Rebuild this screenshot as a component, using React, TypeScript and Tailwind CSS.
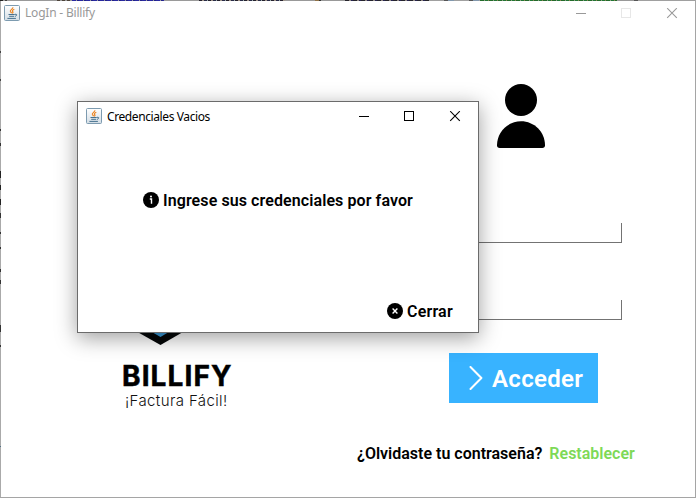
import type { ReactNode } from 'react';

function JavaIcon({ className = '' }: { className?: string }) {
  return (
    <svg className={`h-4 w-4 shrink-0 ${className}`} viewBox="0 0 16 16" fill="none">
      <defs>
        <linearGradient id="java-tile" x1="0" y1="0" x2="0" y2="1">
          <stop offset="0" stopColor="#ffffff" />
          <stop offset="1" stopColor="#d3dde5" />
        </linearGradient>
      </defs>
      <rect x="0.5" y="0.5" width="15" height="15" rx="1" fill="url(#java-tile)" stroke="#7d9bb0" />
      <path d="M8.8 2.3C9.4 4 5.6 4.8 6.4 6.5L7.6 8.2M10.3 4.3C8.2 5.2 8 6 9 7.2L8.4 8.5" stroke="#ec8420" strokeWidth="1.2" />
      <path d="M4.5 9.5h6.2M5.2 11.3h5M3.4 13.4h8.5M10.8 9.4c2.6-.8 2.5 1.3.2 2" stroke="#46718e" strokeWidth="1" />
    </svg>
  );
}

function CaptionButtons({ color, maxColor }: { color: string; maxColor: string }) {
  return (
    <svg className="h-[11px] w-[102px]" viewBox="0 0 102 11" fill="none">
      <path d="M0 5.5h10" stroke={color} />
      <rect x="45.5" y="0.5" width="9" height="9" stroke={maxColor} />
      <path d="M91.2 .2l9.6 9.6M100.8 .2l-9.6 9.6" stroke={color} strokeWidth="1.1" />
    </svg>
  );
}

function Field({ className = '' }: { className?: string }) {
  return <div className={`h-5 w-[200px] border-r border-b border-[#737373] ${className}`} />;
}

function RobotoLine({ children, className = '' }: { children: ReactNode; className?: string }) {
  return <span className={`whitespace-nowrap font-['Roboto',sans-serif] font-semibold ${className}`}>{children}</span>;
}

const topEdge: [number, string][] = [
  [7, 'repeating-linear-gradient(90deg,#222 0 3px,#999 3px 5px,#444 5px 7px)'],
  [50, '#999'],
  [15, 'repeating-linear-gradient(90deg,#4d4339 0 3px,#999 3px 5px)'],
  [92, 'repeating-linear-gradient(90deg,#2929a0 0 4px,#999 4px 5px,#222288 5px 7px)'],
  [35, '#9a9a9a'],
  [86, 'repeating-linear-gradient(90deg,#25212e 0 3px,#a09488 3px 5px,#292b47 5px 8px,#9aa 8px 9px)'],
  [60, 'repeating-linear-gradient(90deg,#999 0 30px,#907247 30px 34px,#333 34px 36px)'],
  [84, 'repeating-linear-gradient(90deg,#26252d 0 4px,#938b85 4px 6px,#282552 6px 8px)'],
  [51, 'repeating-linear-gradient(90deg,#a0a0a0 0 15px,#555 15px 19px,#8298ad 19px 25px)'],
  [137, 'repeating-linear-gradient(90deg,#236b2a 0 4px,#8c9d82 4px 5px,#207735 5px 8px,#8b8050 8px 9px)'],
  [17, '#999'],
  [4, '#555'],
  [58, '#a0a0a0'],
];

export default function App() {
  return (
    <div className="relative flex h-[498px] w-[696px] flex-col overflow-hidden border-r border-b border-[#a5a5a5] bg-white">
      <div className="flex h-px shrink-0 overflow-hidden">
        {topEdge.map(([width, background], i) => (
          <div key={i} className="h-px shrink-0" style={{ width, background }} />
        ))}
      </div>
      <div className="flex min-h-0 flex-1">
        <div className="w-px shrink-0 bg-[linear-gradient(180deg,#aaa_0_50px,#444_50px_52px,#aaa_52px_78px,#444_78px_80px,#aaa_80px_128px,#333_128px_130px,#aaa_130px_142px,#333_142px_145px,#aaa_145px_170px,#222_170px_177px,#aaa_177px_184px,#222_184px_189px,#aaa_189px_198px,#222_198px_204px,#aaa_204px_212px,#333_212px_217px,#aaa_217px_231px,#333_231px_233px,#aaa_233px_246px,#333_246px_248px,#aaa_248px_268px,#333_268px_271px,#aaa_271px_279px,#333_279px_283px,#aaa_283px_324px,#333_324px_331px,#aaa_331px_344px,#333_344px_346px,#aaa_346px_445px,#4f7085_445px_446px,#aaa_446px)]" />
        <div className="flex min-w-0 flex-1 flex-col">
          <header className="flex h-6 items-center justify-between pr-[17px] pl-[3px]">
            <div className="flex items-center">
              <JavaIcon />
              <span className="ml-[5px] whitespace-nowrap font-['Noto_Sans',sans-serif] text-[12px] leading-4 tracking-[-0.2px] text-[#999]">LogIn - Billify</span>
            </div>
            <CaptionButtons color="#999" maxColor="#e7e7e7" />
          </header>
          <main className="flex flex-1">
            <section className="flex w-[350px] flex-col pt-[243px]">
              <svg className="ml-[117px] h-[77px] w-[84px]" viewBox="0 0 84 77">
                <path d="M42.5 0L84 20v33L42.5 77 0 53V20z" fill="#050708" />
                <path d="M42.5 12L70 25v27.5L42.5 69 14 52.5V25z" fill="#3b9ddd" />
              </svg>
              <div className="mt-[18px] ml-[121px] whitespace-nowrap font-['Inter',sans-serif] text-[28px] leading-[27px] font-bold tracking-[1.1px] text-black [-webkit-text-stroke:0.5px_black]">BILLIFY</div>
              <div className="mt-[2px] ml-[124px] whitespace-nowrap font-['Inter',sans-serif] text-[15px] leading-[17px] font-light tracking-[0.38px] text-[#111]">¡Factura Fácil!</div>
            </section>
            <section className="flex flex-1 flex-col pt-[59px]">
              <svg className="ml-[146px] h-16 w-12" viewBox="0 0 48 64">
                <circle cx="24" cy="16" r="16" />
                <path d="M24 37.3C10.7 37.3 0 48 0 61.3C0 63 1 64 2.7 64H45.3C47 64 48 63 48 61.3C48 48 37.3 37.3 24 37.3z" />
              </svg>
              <Field className="mt-[75px] ml-[71px]" />
              <Field className="mt-[57px] ml-[71px]" />
              <button className="mt-[33px] ml-[98px] flex h-[50px] w-[149px] items-center bg-[#38b3ff] pl-[20px] text-white">
                <svg className="h-6 w-[14px]" viewBox="0 0 14 24" fill="none">
                  <path d="M1.5 1L12.4 12 1.5 23" stroke="white" strokeWidth="2" strokeLinecap="round" strokeLinejoin="round" />
                </svg>
                <RobotoLine className="ml-[9px] pt-[2px] text-[24px] tracking-[0.3px]">Acceder</RobotoLine>
              </button>
              <div className="mt-[41px] ml-[6px] flex text-[16px] leading-5 text-black">
                <RobotoLine>¿Olvidaste tu contraseña?</RobotoLine>
                <RobotoLine className="ml-[7px] text-[#7ed957]">Restablecer</RobotoLine>
              </div>
            </section>
          </main>
        </div>
      </div>

      <div role="dialog" className="absolute top-[101px] left-[77px] flex h-[232px] w-[402px] flex-col border border-[#6b6b6b] bg-white shadow-[0_5px_20px_rgba(0,0,0,0.38)]">
        <header className="flex h-[29px] items-center justify-between pr-[17px] pl-2">
          <div className="flex items-center">
            <JavaIcon className="-mt-px" />
            <span className="ml-[5px] whitespace-nowrap font-['Noto_Sans',sans-serif] text-[12px] leading-4 tracking-[-0.4px] text-black">Credenciales Vacios</span>
          </div>
          <CaptionButtons color="#000" maxColor="#000" />
        </header>
        <div className="mt-[59px] ml-[65px] flex h-5 items-center">
          <svg className="h-4 w-4" viewBox="0 0 16 16">
            <circle cx="8" cy="8" r="8" />
            <circle cx="8" cy="4.5" r="1" fill="white" />
            <path d="M6.8 7h1.7v4.8" fill="none" stroke="white" strokeWidth="1.4" />
          </svg>
          <RobotoLine className="ml-1 pt-[2px] text-[16px] tracking-[0.09px]">Ingrese sus credenciales por favor</RobotoLine>
        </div>
        <button className="mt-[91px] ml-[309px] flex h-5 items-center">
          <svg className="h-4 w-4" viewBox="0 0 16 16">
            <circle cx="8" cy="8" r="8" />
            <path d="M5.6 5.6l4.8 4.8M10.4 5.6l-4.8 4.8" stroke="white" strokeWidth="1.4" />
          </svg>
          <RobotoLine className="ml-1 pt-[2px] text-[16px] tracking-[0.2px]">Cerrar</RobotoLine>
        </button>
      </div>
    </div>
  );
}
